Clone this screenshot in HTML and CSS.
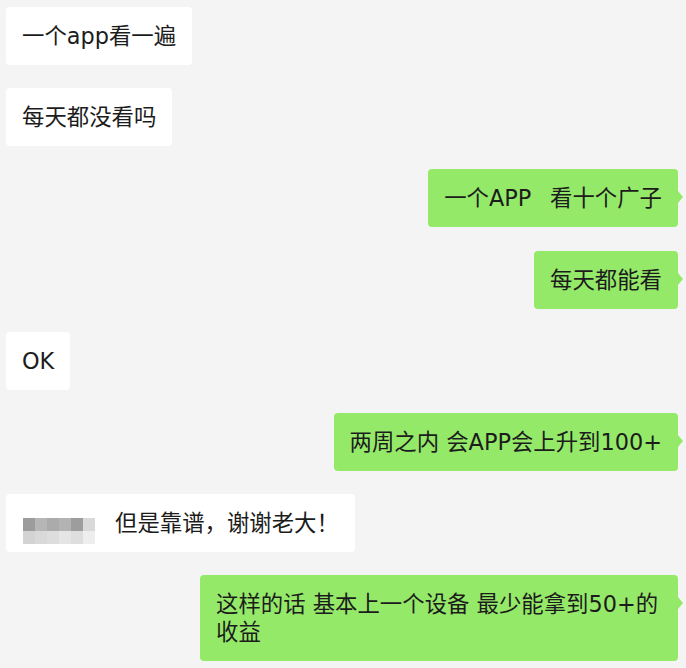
FILE: index.html
```html
<!DOCTYPE html>
<html lang="zh-CN">
<head>
<meta charset="utf-8">
<link rel="stylesheet" href="styles.css">
</head>
<body>
<div class="chat">
  <div class="msg in"><div class="bubble">一个app看一遍</div></div>
  <div class="msg in"><div class="bubble">每天都没看吗</div></div>
  <div class="msg out"><div class="bubble">一个APP&nbsp;&nbsp;&thinsp;看十个广子</div></div>
  <div class="msg out"><div class="bubble">每天都能看</div></div>
  <div class="msg in"><div class="bubble">OK</div></div>
  <div class="msg out"><div class="bubble">两周之内 会APP会上升到100+</div></div>
  <div class="msg in"><div class="bubble"><span class="mosaic"><i class="m1"></i><i class="m2"></i><i class="m3"></i><i class="m4"></i><i class="m5"></i><i class="m6"></i><i class="n1"></i><i class="n2"></i><i class="n3"></i><i class="n4"></i><i class="n5"></i><i class="n6"></i></span>但是靠谱，谢谢老大！</div></div>
  <div class="msg out"><div class="bubble wide">这样的话 基本上一个设备 最少能拿到50+的收益</div></div>
</div>
</body>
</html>
```
FILE: styles.css
```css
html, body {
  margin: 0;
  padding: 0;
  background: #f4f4f4;
}
.chat {
  display: flex;
  flex-direction: column;
  gap: 23.2px;
  padding: 7px 8px 0 6px;
  font-family: "DejaVu Sans", "Noto Sans CJK SC", sans-serif;
  font-size: 22.4px;
  color: #1c1c1c;
}
.msg {
  display: flex;
}
.msg.in { justify-content: flex-start; }
.msg.out { justify-content: flex-end; }
.bubble {
  position: relative;
  padding: 15px 16px;
  line-height: 28px;
  border-radius: 4px;
  max-width: 446px;
  display: flex;
  align-items: center;
}
.msg.in .bubble { background: #ffffff; }
.msg.out .bubble { background: #95e969; }
.msg.out .bubble::after {
  content: "";
  position: absolute;
  right: -5px;
  top: 22px;
  border-top: 6px solid transparent;
  border-bottom: 6px solid transparent;
  border-left: 5px solid #95e969;
}
.bubble.wide { display: block; }
.mosaic {
  display: grid;
  grid-template-columns: repeat(6, 12px);
  grid-template-rows: 13px 13px;
  margin: 8px 20px -8px 1px;
}
.mosaic i { display: block; }
.m1 { background: #9c9c9c; }
.m2 { background: #b6b6b6; }
.m3 { background: #ababab; }
.m4 { background: #b3b3b3; }
.m5 { background: #9d9d9d; }
.m6 { background: #d9d9d9; }
.n1 { background: #d3d3d3; }
.n2 { background: #d9d9d9; }
.n3 { background: #dddddd; }
.n4 { background: #e5e5e5; }
.n5 { background: #dedede; }
.n6 { background: #eeeeee; }
```
